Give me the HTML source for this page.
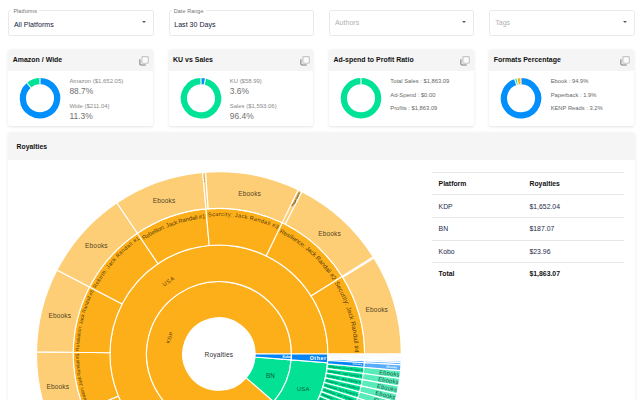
<!DOCTYPE html>
<html><head><meta charset="utf-8"><title>Royalties dashboard</title>
<style>
html,body{margin:0;padding:0;}
body{width:640px;height:400px;overflow:hidden;background:#fff;font-family:"Liberation Sans",sans-serif;position:relative;color:#222;}
.sel{position:absolute;top:10.2px;height:23.8px;width:143.4px;border:0.8px solid #e9e9e9;border-radius:2.5px;background:#fff;box-sizing:content-box;}
.sel .fl{position:absolute;left:2.2px;top:-3.3px;padding:0 2px;background:#fff;font-size:5.5px;line-height:7px;color:#757575;letter-spacing:.05px;}
.sel .v{position:absolute;left:4.7px;top:0;line-height:28.6px;font-size:7.05px;color:#15173a;letter-spacing:.02px;}
.sel .ph{position:absolute;left:5.0px;top:0;line-height:24.2px;font-size:7.05px;color:#b1b1b1;}
.sel .car{position:absolute;right:7.0px;top:10.1px;width:0;height:0;border-left:2.3px solid transparent;border-right:2.3px solid transparent;border-top:2.5px solid #5c5c5c;}
.card{position:absolute;top:50px;width:144.7px;height:76px;background:#fff;border-radius:2px;box-shadow:0 0.5px 3px rgba(0,0,0,.11);}
.card .hd{position:absolute;left:0;top:0;right:0;height:21.3px;background:#f5f5f5;border-radius:2px 2px 0 0;}
.card .hd b{position:absolute;left:4.5px;top:0;line-height:20.5px;font-size:6.95px;color:#111;letter-spacing:.02px;}
.card .ic{position:absolute;right:3.7px;top:5.6px;}
.card svg.dn{position:absolute;left:0;top:0;}
.t1{position:absolute;left:61.2px;font-size:5.95px;line-height:8px;color:#8a8a8a;white-space:nowrap;}
.t2{position:absolute;left:61.2px;font-size:8.45px;line-height:10px;color:#707070;white-space:nowrap;}
.t3{position:absolute;left:61.4px;font-size:5.8px;line-height:8px;color:#676767;white-space:nowrap;}
#roy{position:absolute;left:8px;top:132.5px;width:627.4px;height:280px;background:#fff;border-radius:2px;box-shadow:0 0.5px 3px rgba(0,0,0,.11);}
#roy .hd{position:absolute;left:0;top:0;right:0;height:27px;background:#f5f5f5;border-radius:2px 2px 0 0;}
#roy .hd b{position:absolute;left:8.6px;top:0;line-height:28.6px;font-size:6.85px;color:#111;}
#sb{position:absolute;left:0;top:0;}
#sb text{font-family:"Liberation Sans",sans-serif;}
.tb{position:absolute;left:432px;width:192.3px;}
.tb .ln{position:absolute;left:0;right:0;height:0.8px;background:#e6e6e6;}
.tb span{position:absolute;font-size:6.85px;line-height:10px;white-space:nowrap;color:#23294a;}
.tb span.b{font-weight:bold;color:#111;}
</style></head><body>

<div class="sel" style="left:8.2px"><span class="fl">Platforms</span><span class="v">All Platforms</span><i class="car"></i></div>
<div class="sel" style="left:168.55px"><span class="fl">Date Range</span><span class="v">Last 30 Days</span></div>
<div class="sel" style="left:328.9px"><span class="ph">Authors</span><i class="car"></i></div>
<div class="sel" style="left:489.25px"><span class="ph">Tags</span><i class="car"></i></div>
<div class="card" style="left:8.2px"><div class="hd"><b>Amazon / Wide</b><svg class="ic" viewBox="0 0 10 10" width="10" height="10"><path d="M0.9 3.2V8.1Q0.9 9 1.8 9H6.8" fill="none" stroke="#7c7c7c" stroke-width="1.05"/><rect x="2.9" y="0.6" width="6.4" height="6.6" rx="0.8" fill="#fbfbfb" stroke="#c6c6c6" stroke-width="1.15"/></svg></div><svg class="dn" width="146" height="76" viewBox="0 0 146 76"><path d="M32.00 31.12A17.125 17.125 0 1 1 20.84 35.26" fill="none" stroke="#008ffb" stroke-width="6.25"/>
<path d="M20.84 35.26A17.125 17.125 0 0 1 32.00 31.12" fill="none" stroke="#00e396" stroke-width="6.25"/>
<path d="M32.00 34.75L32.00 27.50" stroke="#fff" stroke-width="1.1"/>
<path d="M23.20 38.01L18.47 32.51" stroke="#fff" stroke-width="1.1"/></svg><span class="t1" style="top:26.8px">Amazon ($1,652.05)</span><span class="t2" style="top:36px">88.7%</span><span class="t1" style="top:52px">Wide ($211.04)</span><span class="t2" style="top:60.8px">11.3%</span></div>
<div class="card" style="left:168.55px"><div class="hd"><b>KU vs Sales</b><svg class="ic" viewBox="0 0 10 10" width="10" height="10"><path d="M0.9 3.2V8.1Q0.9 9 1.8 9H6.8" fill="none" stroke="#7c7c7c" stroke-width="1.05"/><rect x="2.9" y="0.6" width="6.4" height="6.6" rx="0.8" fill="#fbfbfb" stroke="#c6c6c6" stroke-width="1.15"/></svg></div><svg class="dn" width="146" height="76" viewBox="0 0 146 76"><path d="M32.00 31.12A17.125 17.125 0 0 1 35.84 31.56" fill="none" stroke="#008ffb" stroke-width="6.25"/>
<path d="M35.84 31.56A17.125 17.125 0 1 1 32.00 31.12" fill="none" stroke="#00e396" stroke-width="6.25"/>
<path d="M32.00 34.75L32.00 27.50" stroke="#fff" stroke-width="1.1"/>
<path d="M35.03 35.09L36.65 28.03" stroke="#fff" stroke-width="1.1"/></svg><span class="t1" style="top:26.8px">KU ($58.99)</span><span class="t2" style="top:36px">3.6%</span><span class="t1" style="top:52px">Sales ($1,593.06)</span><span class="t2" style="top:60.8px">96.4%</span></div>
<div class="card" style="left:328.9px"><div class="hd"><b>Ad-spend to Profit Ratio</b><svg class="ic" viewBox="0 0 10 10" width="10" height="10"><path d="M0.9 3.2V8.1Q0.9 9 1.8 9H6.8" fill="none" stroke="#7c7c7c" stroke-width="1.05"/><rect x="2.9" y="0.6" width="6.4" height="6.6" rx="0.8" fill="#fbfbfb" stroke="#c6c6c6" stroke-width="1.15"/></svg></div><svg class="dn" width="146" height="76" viewBox="0 0 146 76"><circle cx="32.0" cy="48.25" r="17.125" fill="none" stroke="#00e396" stroke-width="6.25"/>
<path d="M32.00 34.75L32.00 27.50" stroke="#fff" stroke-width="1.1"/></svg><span class="t3" style="top:26.6px">Total Sales : $1,863.09</span><span class="t3" style="top:40.5px">Ad-Spend : $0.00</span><span class="t3" style="top:54.3px">Profits : $1,863.09</span></div>
<div class="card" style="left:489.25px"><div class="hd"><b>Formats Percentage</b><svg class="ic" viewBox="0 0 10 10" width="10" height="10"><path d="M0.9 3.2V8.1Q0.9 9 1.8 9H6.8" fill="none" stroke="#7c7c7c" stroke-width="1.05"/><rect x="2.9" y="0.6" width="6.4" height="6.6" rx="0.8" fill="#fbfbfb" stroke="#c6c6c6" stroke-width="1.15"/></svg></div><svg class="dn" width="146" height="76" viewBox="0 0 146 76"><path d="M32.00 31.12A17.125 17.125 0 1 1 26.61 32.00" fill="none" stroke="#008ffb" stroke-width="6.25"/>
<path d="M26.61 32.00A17.125 17.125 0 0 1 28.58 31.47" fill="none" stroke="#00e396" stroke-width="6.25"/>
<path d="M28.58 31.47A17.125 17.125 0 0 1 32.00 31.12" fill="none" stroke="#feb019" stroke-width="6.25"/>
<path d="M32.00 34.75L32.00 27.50" stroke="#fff" stroke-width="1.1"/>
<path d="M27.75 35.44L25.46 28.56" stroke="#fff" stroke-width="1.1"/>
<path d="M29.30 35.02L27.86 27.92" stroke="#fff" stroke-width="1.1"/></svg><span class="t3" style="top:26.6px">Ebook : 94.9%</span><span class="t3" style="top:40.5px">Paperback : 1.9%</span><span class="t3" style="top:54.3px">KENP Reads : 3.2%</span></div>
<div id="roy"><div class="hd"><b>Royalties</b></div></div>
<svg id="sb" width="640" height="400" viewBox="0 0 640 400"><defs><path id="bk0" d="M89.28 406.68A139.89999999999998 139.89999999999998 0 0 1 79.00 353.81" fill="none"/><path id="bk1" d="M79.04 350.88A139.89999999999998 139.89999999999998 0 0 1 94.03 290.97" fill="none"/><path id="bk2" d="M95.91 288.65A139.29999999999998 139.29999999999998 0 0 1 139.80 239.39" fill="none"/><path id="bk3" d="M143.76 240.09A136.5 136.5 0 0 1 205.34 218.22" fill="none"/><path id="bk4" d="M208.07 216.48A138.0 138.0 0 0 1 277.66 229.18" fill="none"/><path id="bk5" d="M279.28 232.41A135.79999999999998 135.79999999999998 0 0 1 333.05 280.49" fill="none"/><path id="bk6" d="M334.39 283.00A135.6 135.6 0 0 1 354.49 352.63" fill="none"/></defs>
<path d="M246.22 377.80L273.62 401.61A72.5 72.5 0 1 1 291.40 354.05L255.10 354.05A36.2 36.2 0 1 0 246.22 377.80Z" fill="#fdaf19" stroke="#fff" stroke-width="1.12"/>
<path d="M254.98 356.95L291.17 359.86A72.5 72.5 0 0 1 273.62 401.61L246.22 377.80A36.2 36.2 0 0 0 254.98 356.95Z" fill="#02e194" stroke="#fff" stroke-width="1.12"/>
<path d="M255.10 354.05L291.40 354.05A72.5 72.5 0 0 1 291.17 359.86L254.98 356.95A36.2 36.2 0 0 0 255.10 354.05Z" fill="#0585f5" stroke="#fff" stroke-width="1.12"/>
<path d="M273.62 401.61L301.16 425.56A109.0 109.0 0 0 1 180.19 455.95L193.15 421.82A72.5 72.5 0 0 0 273.62 401.61Z" fill="#fdaf19" stroke="#fff" stroke-width="1.12"/>
<path d="M193.15 421.82L180.19 455.95A109.0 109.0 0 1 1 327.90 354.05L291.40 354.05A72.5 72.5 0 1 0 193.15 421.82Z" fill="#fdaf19" stroke="#fff" stroke-width="1.12"/>
<path d="M291.17 359.86L327.55 362.79A109.0 109.0 0 0 1 301.16 425.56L273.62 401.61A72.5 72.5 0 0 0 291.17 359.86Z" fill="#02e194" stroke="#fff" stroke-width="1.12"/>
<path d="M291.40 354.05L327.90 354.05A109.0 109.0 0 0 1 327.55 362.79L291.17 359.86A72.5 72.5 0 0 0 291.40 354.05Z" fill="#0585f5" stroke="#fff" stroke-width="1.12"/>
<path d="M180.19 455.95L167.16 490.25A145.7 145.7 0 0 1 84.49 410.28L118.34 396.11A109.0 109.0 0 0 0 180.19 455.95Z" fill="#fdaf19" stroke="#fff" stroke-width="1.12"/>
<path d="M167.16 490.25L154.13 524.56A182.4 182.4 0 0 1 50.63 424.44L84.49 410.28A145.7 145.7 0 0 0 167.16 490.25Z" fill="#fdce75" stroke="#fff" stroke-width="1.12"/>
<path d="M118.34 396.11L84.49 410.28A145.7 145.7 0 0 1 73.21 352.27L109.91 352.72A109.0 109.0 0 0 0 118.34 396.11Z" fill="#fdaf19" stroke="#fff" stroke-width="1.12"/>
<path d="M84.49 410.28L50.63 424.44A182.4 182.4 0 0 1 36.51 351.82L73.21 352.27A145.7 145.7 0 0 0 84.49 410.28Z" fill="#fdce75" stroke="#fff" stroke-width="1.12"/>
<text x="57.86" y="386.15" font-size="6.6" fill="rgba(0,0,0,.72)" text-anchor="middle" dominant-baseline="central" font-weight="normal" letter-spacing="0.1">Ebooks</text>
<text font-size="4.9" fill="rgba(0,0,0,.72)" textLength="54.2" lengthAdjust="spacing"><textPath href="#bk0" textLength="54.2" lengthAdjust="spacing">Liberation: Jack Randall #5</textPath></text>
<path d="M109.91 352.72L73.21 352.27A145.7 145.7 0 0 1 89.55 287.00L122.13 303.89A109.0 109.0 0 0 0 109.91 352.72Z" fill="#fdaf19" stroke="#fff" stroke-width="1.12"/>
<path d="M73.21 352.27L36.51 351.82A182.4 182.4 0 0 1 56.96 270.11L89.55 287.00A145.7 145.7 0 0 0 73.21 352.27Z" fill="#fdce75" stroke="#fff" stroke-width="1.12"/>
<text x="59.76" y="315.02" font-size="6.6" fill="rgba(0,0,0,.72)" text-anchor="middle" dominant-baseline="central" font-weight="normal" letter-spacing="0.1">Ebooks</text>
<text font-size="4.9" fill="rgba(0,0,0,.72)" textLength="62.3" lengthAdjust="spacing"><textPath href="#bk1" textLength="62.3" lengthAdjust="spacing">Retaliation: Jack Randall #6</textPath></text>
<path d="M122.13 303.89L89.55 287.00A145.7 145.7 0 0 1 137.43 233.26L157.95 263.68A109.0 109.0 0 0 0 122.13 303.89Z" fill="#fdaf19" stroke="#fff" stroke-width="1.12"/>
<path d="M89.55 287.00L56.96 270.11A182.4 182.4 0 0 1 116.90 202.83L137.43 233.26A145.7 145.7 0 0 0 89.55 287.00Z" fill="#fdce75" stroke="#fff" stroke-width="1.12"/>
<text x="96.41" y="245.72" font-size="6.6" fill="rgba(0,0,0,.72)" text-anchor="middle" dominant-baseline="central" font-weight="normal" letter-spacing="0.1">Ebooks</text>
<text font-size="5.4" fill="rgba(0,0,0,.72)" textLength="66.6" lengthAdjust="spacing"><textPath href="#bk2" textLength="66.6" lengthAdjust="spacing">Rebirth: Jack Randall #1</textPath></text>
<path d="M157.95 263.68L137.43 233.26A145.7 145.7 0 0 1 205.95 208.93L209.21 245.48A109.0 109.0 0 0 0 157.95 263.68Z" fill="#fdaf19" stroke="#fff" stroke-width="1.12"/>
<path d="M137.43 233.26L116.90 202.83A182.4 182.4 0 0 1 202.69 172.37L205.95 208.93A145.7 145.7 0 0 0 137.43 233.26Z" fill="#fdce75" stroke="#fff" stroke-width="1.12"/>
<text x="164.00" y="200.26" font-size="6.6" fill="rgba(0,0,0,.72)" text-anchor="middle" dominant-baseline="central" font-weight="normal" letter-spacing="0.1">Ebooks</text>
<text font-size="5.9" fill="rgba(0,0,0,.72)" textLength="66.0" lengthAdjust="spacing"><textPath href="#bk3" textLength="66.0" lengthAdjust="spacing">Rebellion: Jack Randall #1</textPath></text>
<path d="M209.21 245.48L205.95 208.93A145.7 145.7 0 0 1 282.31 222.87L266.34 255.92A109.0 109.0 0 0 0 209.21 245.48Z" fill="#fdaf19" stroke="#fff" stroke-width="1.12"/>
<path d="M205.95 208.93L202.69 172.37A182.4 182.4 0 0 1 205.54 172.14L208.23 208.74A145.7 145.7 0 0 0 205.95 208.93Z" fill="#fdce75" stroke="#fff" stroke-width="1.12"/>
<path d="M208.23 208.74L205.54 172.14A182.4 182.4 0 0 1 298.29 189.83L282.31 222.87A145.7 145.7 0 0 0 208.23 208.74Z" fill="#fdce75" stroke="#fff" stroke-width="1.12"/>
<text x="249.64" y="193.71" font-size="6.6" fill="rgba(0,0,0,.72)" text-anchor="middle" dominant-baseline="central" font-weight="normal" letter-spacing="0.1">Ebooks</text>
<text font-size="5.7" fill="rgba(0,0,0,.72)" textLength="71.5" lengthAdjust="spacing"><textPath href="#bk4" textLength="71.5" lengthAdjust="spacing">Scarcity: Jack Randall #3</textPath></text>
<path d="M266.34 255.92L282.31 222.87A145.7 145.7 0 0 1 342.19 276.41L311.14 295.97A109.0 109.0 0 0 0 266.34 255.92Z" fill="#fdaf19" stroke="#fff" stroke-width="1.12"/>
<path d="M282.31 222.87L298.29 189.83A182.4 182.4 0 0 1 301.99 191.68L285.27 224.35A145.7 145.7 0 0 0 282.31 222.87Z" fill="#fdce75" stroke="#fff" stroke-width="1.12"/>
<path d="M285.27 224.35L301.99 191.68A182.4 182.4 0 0 1 373.25 256.85L342.19 276.41A145.7 145.7 0 0 0 285.27 224.35Z" fill="#fdce75" stroke="#fff" stroke-width="1.12"/>
<text x="329.62" y="233.80" font-size="6.6" fill="rgba(0,0,0,.72)" text-anchor="middle" dominant-baseline="central" font-weight="normal" letter-spacing="0.1">Ebooks</text>
<text font-size="6.2" fill="rgba(0,0,0,.72)" textLength="73.0" lengthAdjust="spacing"><textPath href="#bk5" textLength="73.0" lengthAdjust="spacing">Resilience: Jack Randall #2</textPath></text>
<path d="M311.14 295.97L342.19 276.41A145.7 145.7 0 0 1 364.60 354.05L327.90 354.05A109.0 109.0 0 0 0 311.14 295.97Z" fill="#fdaf19" stroke="#fff" stroke-width="1.12"/>
<path d="M342.19 276.41L373.25 256.85A182.4 182.4 0 0 1 374.00 258.07L342.80 277.38A145.7 145.7 0 0 0 342.19 276.41Z" fill="#fdce75" stroke="#fff" stroke-width="1.12"/>
<path d="M342.80 277.38L374.00 258.07A182.4 182.4 0 0 1 401.30 354.05L364.60 354.05A145.7 145.7 0 0 0 342.80 277.38Z" fill="#fdce75" stroke="#fff" stroke-width="1.12"/>
<text x="376.69" y="309.98" font-size="6.6" fill="rgba(0,0,0,.72)" text-anchor="middle" dominant-baseline="central" font-weight="normal" letter-spacing="0.1">Ebooks</text>
<text font-size="6.3" fill="rgba(0,0,0,.72)" textLength="73.4" lengthAdjust="spacing"><textPath href="#bk6" textLength="73.4" lengthAdjust="spacing">Security: Jack Randall #4</textPath></text>
<text x="204.60" y="178.23" font-size="1.9" fill="rgba(0,0,0,.6)" text-anchor="middle" dominant-baseline="central" font-weight="normal" letter-spacing="0" transform="rotate(445.4 204.60 178.23)">Paperback</text>
<text x="295.91" y="199.25" font-size="3.1" fill="rgba(0,0,0,.8)" text-anchor="middle" dominant-baseline="central" font-weight="bold" letter-spacing="0" transform="rotate(296.4 295.91 199.25)">Paperback</text>
<path d="M327.45 363.93L364.00 367.26A145.7 145.7 0 0 1 363.29 373.57L326.92 368.65A109.0 109.0 0 0 0 327.45 363.93Z" fill="#02e194" stroke="#fff" stroke-width="1.12"/>
<path d="M364.00 367.26L400.55 370.58A182.4 182.4 0 0 1 399.66 378.49L363.29 373.57A145.7 145.7 0 0 0 364.00 367.26Z" fill="#58ecba" stroke="#fff" stroke-width="1.12"/>
<text x="389.46" y="373.33" font-size="5.9" fill="rgba(0,0,0,.7)" text-anchor="middle" dominant-baseline="central" font-weight="normal" letter-spacing="0.15" transform="rotate(6.5 389.46 373.33)">Ebooks</text>
<text x="346.44" y="368.47" font-size="3.0" fill="rgba(0,0,0,.75)" text-anchor="middle" dominant-baseline="central" font-weight="normal" letter-spacing="0" transform="rotate(6.5 346.44 368.47)">Rebellion: Jack Randall #1</text>
<path d="M326.92 368.65L363.29 373.57A145.7 145.7 0 0 1 362.34 379.60L326.21 373.16A109.0 109.0 0 0 0 326.92 368.65Z" fill="#02e194" stroke="#fff" stroke-width="1.12"/>
<path d="M363.29 373.57L399.66 378.49A182.4 182.4 0 0 1 398.47 386.04L362.34 379.60A145.7 145.7 0 0 0 363.29 373.57Z" fill="#58ecba" stroke="#fff" stroke-width="1.12"/>
<text x="388.48" y="380.61" font-size="5.9" fill="rgba(0,0,0,.7)" text-anchor="middle" dominant-baseline="central" font-weight="normal" letter-spacing="0.15" transform="rotate(8.9 388.48 380.61)">Ebooks</text>
<text x="345.70" y="373.91" font-size="3.0" fill="rgba(0,0,0,.75)" text-anchor="middle" dominant-baseline="central" font-weight="normal" letter-spacing="0" transform="rotate(8.9 345.70 373.91)">Rebellion: Jack Randall #1</text>
<path d="M326.21 373.16L362.34 379.60A145.7 145.7 0 0 1 361.09 385.83L325.27 377.83A109.0 109.0 0 0 0 326.21 373.16Z" fill="#02e194" stroke="#fff" stroke-width="1.12"/>
<path d="M362.34 379.60L398.47 386.04A182.4 182.4 0 0 1 396.91 393.84L361.09 385.83A145.7 145.7 0 0 0 362.34 379.60Z" fill="#58ecba" stroke="#fff" stroke-width="1.12"/>
<text x="387.19" y="387.83" font-size="5.9" fill="rgba(0,0,0,.7)" text-anchor="middle" dominant-baseline="central" font-weight="normal" letter-spacing="0.15" transform="rotate(11.3 387.19 387.83)">Ebooks</text>
<text x="344.74" y="379.31" font-size="3.0" fill="rgba(0,0,0,.75)" text-anchor="middle" dominant-baseline="central" font-weight="normal" letter-spacing="0" transform="rotate(11.3 344.74 379.31)">Rebellion: Jack Randall #1</text>
<path d="M325.27 377.83L361.09 385.83A145.7 145.7 0 0 1 359.57 392.01L324.14 382.44A109.0 109.0 0 0 0 325.27 377.83Z" fill="#02e194" stroke="#fff" stroke-width="1.12"/>
<path d="M361.09 385.83L396.91 393.84A182.4 182.4 0 0 1 395.00 401.57L359.57 392.01A145.7 145.7 0 0 0 361.09 385.83Z" fill="#58ecba" stroke="#fff" stroke-width="1.12"/>
<text x="385.56" y="395.14" font-size="5.9" fill="rgba(0,0,0,.7)" text-anchor="middle" dominant-baseline="central" font-weight="normal" letter-spacing="0.15" transform="rotate(13.8 385.56 395.14)">Ebooks</text>
<text x="343.52" y="384.77" font-size="3.0" fill="rgba(0,0,0,.75)" text-anchor="middle" dominant-baseline="central" font-weight="normal" letter-spacing="0" transform="rotate(13.8 343.52 384.77)">Rebellion: Jack Randall #1</text>
<path d="M324.14 382.44L359.57 392.01A145.7 145.7 0 0 1 357.78 398.11L322.80 387.01A109.0 109.0 0 0 0 324.14 382.44Z" fill="#02e194" stroke="#fff" stroke-width="1.12"/>
<path d="M359.57 392.01L395.00 401.57A182.4 182.4 0 0 1 392.76 409.20L357.78 398.11A145.7 145.7 0 0 0 359.57 392.01Z" fill="#58ecba" stroke="#fff" stroke-width="1.12"/>
<text x="383.61" y="402.37" font-size="5.9" fill="rgba(0,0,0,.7)" text-anchor="middle" dominant-baseline="central" font-weight="normal" letter-spacing="0.15" transform="rotate(16.4 383.61 402.37)">Ebooks</text>
<text x="342.06" y="390.18" font-size="3.0" fill="rgba(0,0,0,.75)" text-anchor="middle" dominant-baseline="central" font-weight="normal" letter-spacing="0" transform="rotate(16.4 342.06 390.18)">Rebellion: Jack Randall #1</text>
<path d="M322.80 387.01L357.78 398.11A145.7 145.7 0 0 1 355.68 404.24L321.23 391.60A109.0 109.0 0 0 0 322.80 387.01Z" fill="#02e194" stroke="#fff" stroke-width="1.12"/>
<path d="M357.78 398.11L392.76 409.20A182.4 182.4 0 0 1 390.14 416.88L355.68 404.24A145.7 145.7 0 0 0 357.78 398.11Z" fill="#58ecba" stroke="#fff" stroke-width="1.12"/>
<text x="381.32" y="409.58" font-size="5.9" fill="rgba(0,0,0,.7)" text-anchor="middle" dominant-baseline="central" font-weight="normal" letter-spacing="0.15" transform="rotate(18.9 381.32 409.58)">Ebooks</text>
<text x="340.35" y="395.57" font-size="3.0" fill="rgba(0,0,0,.75)" text-anchor="middle" dominant-baseline="central" font-weight="normal" letter-spacing="0" transform="rotate(18.9 340.35 395.57)">Rebellion: Jack Randall #1</text>
<path d="M321.23 391.60L355.68 404.24A145.7 145.7 0 0 1 353.36 410.16L319.49 396.03A109.0 109.0 0 0 0 321.23 391.60Z" fill="#02e194" stroke="#fff" stroke-width="1.12"/>
<path d="M355.68 404.24L390.14 416.88A182.4 182.4 0 0 1 387.23 424.29L353.36 410.16A145.7 145.7 0 0 0 355.68 404.24Z" fill="#58ecba" stroke="#fff" stroke-width="1.12"/>
<text x="378.72" y="416.68" font-size="5.9" fill="rgba(0,0,0,.7)" text-anchor="middle" dominant-baseline="central" font-weight="normal" letter-spacing="0.15" transform="rotate(21.4 378.72 416.68)">Ebooks</text>
<text x="338.40" y="400.88" font-size="3.0" fill="rgba(0,0,0,.75)" text-anchor="middle" dominant-baseline="central" font-weight="normal" letter-spacing="0" transform="rotate(21.4 338.40 400.88)">Rebellion: Jack Randall #1</text>
<path d="M319.49 396.03L353.36 410.16A145.7 145.7 0 0 1 350.79 415.97L317.57 400.37A109.0 109.0 0 0 0 319.49 396.03Z" fill="#02e194" stroke="#fff" stroke-width="1.12"/>
<path d="M353.36 410.16L387.23 424.29A182.4 182.4 0 0 1 384.01 431.57L350.79 415.97A145.7 145.7 0 0 0 353.36 410.16Z" fill="#58ecba" stroke="#fff" stroke-width="1.12"/>
<text x="375.83" y="423.59" font-size="5.9" fill="rgba(0,0,0,.7)" text-anchor="middle" dominant-baseline="central" font-weight="normal" letter-spacing="0.15" transform="rotate(23.9 375.83 423.59)">Ebooks</text>
<text x="336.24" y="406.05" font-size="3.0" fill="rgba(0,0,0,.75)" text-anchor="middle" dominant-baseline="central" font-weight="normal" letter-spacing="0" transform="rotate(23.9 336.24 406.05)">Rebellion: Jack Randall #1</text>
<path d="M317.57 400.37L350.79 415.97A145.7 145.7 0 0 1 347.96 421.66L315.45 404.63A109.0 109.0 0 0 0 317.57 400.37Z" fill="#02e194" stroke="#fff" stroke-width="1.12"/>
<path d="M350.79 415.97L384.01 431.57A182.4 182.4 0 0 1 380.47 438.70L347.96 421.66A145.7 145.7 0 0 0 350.79 415.97Z" fill="#58ecba" stroke="#fff" stroke-width="1.12"/>
<text x="372.65" y="430.37" font-size="5.9" fill="rgba(0,0,0,.7)" text-anchor="middle" dominant-baseline="central" font-weight="normal" letter-spacing="0.15" transform="rotate(26.4 372.65 430.37)">Ebooks</text>
<text x="333.86" y="411.12" font-size="3.0" fill="rgba(0,0,0,.75)" text-anchor="middle" dominant-baseline="central" font-weight="normal" letter-spacing="0" transform="rotate(26.4 333.86 411.12)">Rebellion: Jack Randall #1</text>
<path d="M315.45 404.63L347.96 421.66A145.7 145.7 0 0 1 344.89 427.23L313.15 408.80A109.0 109.0 0 0 0 315.45 404.63Z" fill="#02e194" stroke="#fff" stroke-width="1.12"/>
<path d="M347.96 421.66L380.47 438.70A182.4 182.4 0 0 1 376.62 445.66L344.89 427.23A145.7 145.7 0 0 0 347.96 421.66Z" fill="#58ecba" stroke="#fff" stroke-width="1.12"/>
<text x="369.17" y="437.01" font-size="5.9" fill="rgba(0,0,0,.7)" text-anchor="middle" dominant-baseline="central" font-weight="normal" letter-spacing="0.15" transform="rotate(28.9 369.17 437.01)">Ebooks</text>
<text x="331.27" y="416.08" font-size="3.0" fill="rgba(0,0,0,.75)" text-anchor="middle" dominant-baseline="central" font-weight="normal" letter-spacing="0" transform="rotate(28.9 331.27 416.08)">Rebellion: Jack Randall #1</text>
<path d="M313.15 408.80L344.89 427.23A145.7 145.7 0 0 1 341.58 432.66L310.68 412.86A109.0 109.0 0 0 0 313.15 408.80Z" fill="#02e194" stroke="#fff" stroke-width="1.12"/>
<path d="M344.89 427.23L376.62 445.66A182.4 182.4 0 0 1 372.48 452.46L341.58 432.66A145.7 145.7 0 0 0 344.89 427.23Z" fill="#58ecba" stroke="#fff" stroke-width="1.12"/>
<text x="365.41" y="443.48" font-size="5.9" fill="rgba(0,0,0,.7)" text-anchor="middle" dominant-baseline="central" font-weight="normal" letter-spacing="0.15" transform="rotate(31.4 365.41 443.48)">Ebooks</text>
<text x="328.45" y="420.92" font-size="3.0" fill="rgba(0,0,0,.75)" text-anchor="middle" dominant-baseline="central" font-weight="normal" letter-spacing="0" transform="rotate(31.4 328.45 420.92)">Rebellion: Jack Randall #1</text>
<path d="M310.68 412.86L341.58 432.66A145.7 145.7 0 0 1 338.03 437.93L308.02 416.80A109.0 109.0 0 0 0 310.68 412.86Z" fill="#02e194" stroke="#fff" stroke-width="1.12"/>
<path d="M341.58 432.66L372.48 452.46A182.4 182.4 0 0 1 368.04 459.06L338.03 437.93A145.7 145.7 0 0 0 341.58 432.66Z" fill="#58ecba" stroke="#fff" stroke-width="1.12"/>
<text x="361.37" y="449.79" font-size="5.9" fill="rgba(0,0,0,.7)" text-anchor="middle" dominant-baseline="central" font-weight="normal" letter-spacing="0.15" transform="rotate(33.9 361.37 449.79)">Ebooks</text>
<text x="325.43" y="425.64" font-size="3.0" fill="rgba(0,0,0,.75)" text-anchor="middle" dominant-baseline="central" font-weight="normal" letter-spacing="0" transform="rotate(33.9 325.43 425.64)">Rebellion: Jack Randall #1</text>
<path d="M308.02 416.80L338.03 437.93A145.7 145.7 0 0 1 334.26 443.05L305.20 420.63A109.0 109.0 0 0 0 308.02 416.80Z" fill="#02e194" stroke="#fff" stroke-width="1.12"/>
<path d="M338.03 437.93L368.04 459.06A182.4 182.4 0 0 1 363.32 465.47L334.26 443.05A145.7 145.7 0 0 0 338.03 437.93Z" fill="#58ecba" stroke="#fff" stroke-width="1.12"/>
<text x="357.06" y="455.91" font-size="5.9" fill="rgba(0,0,0,.7)" text-anchor="middle" dominant-baseline="central" font-weight="normal" letter-spacing="0.15" transform="rotate(36.4 357.06 455.91)">Ebooks</text>
<text x="322.21" y="430.22" font-size="3.0" fill="rgba(0,0,0,.75)" text-anchor="middle" dominant-baseline="central" font-weight="normal" letter-spacing="0" transform="rotate(36.4 322.21 430.22)">Rebellion: Jack Randall #1</text>
<path d="M305.20 420.63L334.26 443.05A145.7 145.7 0 0 1 330.27 448.00L302.22 424.33A109.0 109.0 0 0 0 305.20 420.63Z" fill="#02e194" stroke="#fff" stroke-width="1.12"/>
<path d="M334.26 443.05L363.32 465.47A182.4 182.4 0 0 1 358.32 471.66L330.27 448.00A145.7 145.7 0 0 0 334.26 443.05Z" fill="#58ecba" stroke="#fff" stroke-width="1.12"/>
<text x="352.49" y="461.84" font-size="5.9" fill="rgba(0,0,0,.7)" text-anchor="middle" dominant-baseline="central" font-weight="normal" letter-spacing="0.15" transform="rotate(38.9 352.49 461.84)">Ebooks</text>
<text x="318.79" y="434.65" font-size="3.0" fill="rgba(0,0,0,.75)" text-anchor="middle" dominant-baseline="central" font-weight="normal" letter-spacing="0" transform="rotate(38.9 318.79 434.65)">Rebellion: Jack Randall #1</text>
<path d="M302.22 424.33L330.27 448.00A145.7 145.7 0 0 1 328.86 449.64L301.16 425.56A109.0 109.0 0 0 0 302.22 424.33Z" fill="#02e194" stroke="#fff" stroke-width="1.12"/>
<path d="M330.27 448.00L358.32 471.66A182.4 182.4 0 0 1 356.56 473.72L328.86 449.64A145.7 145.7 0 0 0 330.27 448.00Z" fill="#58ecba" stroke="#fff" stroke-width="1.12"/>
<text x="349.28" y="465.70" font-size="5.9" fill="rgba(0,0,0,.7)" text-anchor="middle" dominant-baseline="central" font-weight="normal" letter-spacing="0.15" transform="rotate(40.6 349.28 465.70)">Ebooks</text>
<text x="316.39" y="437.53" font-size="3.0" fill="rgba(0,0,0,.75)" text-anchor="middle" dominant-baseline="central" font-weight="normal" letter-spacing="0" transform="rotate(40.6 316.39 437.53)">Rebellion: Jack Randall #1</text>
<path d="M327.90 354.05L364.60 354.05A145.7 145.7 0 0 1 364.60 354.56L327.90 354.43A109.0 109.0 0 0 0 327.90 354.05Z" fill="#0585f5" stroke="#fff" stroke-width="1.12"/>
<path d="M364.60 354.05L401.30 354.05A182.4 182.4 0 0 1 401.30 354.69L364.60 354.56A145.7 145.7 0 0 0 364.60 354.05Z" fill="#58acfa" stroke="#fff" stroke-width="1.12"/>
<path d="M327.90 354.43L364.60 354.56A145.7 145.7 0 0 1 364.60 355.07L327.90 354.81A109.0 109.0 0 0 0 327.90 354.43Z" fill="#0585f5" stroke="#fff" stroke-width="1.12"/>
<path d="M364.60 354.56L401.30 354.69A182.4 182.4 0 0 1 401.30 355.32L364.60 355.07A145.7 145.7 0 0 0 364.60 354.56Z" fill="#58acfa" stroke="#fff" stroke-width="1.12"/>
<path d="M327.90 354.81L364.60 355.07A145.7 145.7 0 0 1 364.59 355.70L327.89 355.29A109.0 109.0 0 0 0 327.90 354.81Z" fill="#0585f5" stroke="#fff" stroke-width="1.12"/>
<path d="M364.60 355.07L401.30 355.32A182.4 182.4 0 0 1 401.29 356.12L364.59 355.70A145.7 145.7 0 0 0 364.60 355.07Z" fill="#58acfa" stroke="#fff" stroke-width="1.12"/>
<path d="M327.89 355.29L364.59 355.70A145.7 145.7 0 0 1 364.58 356.34L327.89 355.76A109.0 109.0 0 0 0 327.89 355.29Z" fill="#0585f5" stroke="#fff" stroke-width="1.12"/>
<path d="M364.59 355.70L401.29 356.12A182.4 182.4 0 0 1 401.28 356.92L364.58 356.34A145.7 145.7 0 0 0 364.59 355.70Z" fill="#58acfa" stroke="#fff" stroke-width="1.12"/>
<path d="M327.89 355.76L364.58 356.34A145.7 145.7 0 0 1 364.57 357.10L327.88 356.33A109.0 109.0 0 0 0 327.89 355.76Z" fill="#0585f5" stroke="#fff" stroke-width="1.12"/>
<path d="M364.58 356.34L401.28 356.92A182.4 182.4 0 0 1 401.26 357.87L364.57 357.10A145.7 145.7 0 0 0 364.58 356.34Z" fill="#58acfa" stroke="#fff" stroke-width="1.12"/>
<path d="M327.88 356.33L364.57 357.10A145.7 145.7 0 0 1 364.55 357.86L327.86 356.90A109.0 109.0 0 0 0 327.88 356.33Z" fill="#0585f5" stroke="#fff" stroke-width="1.12"/>
<path d="M364.57 357.10L401.26 357.87A182.4 182.4 0 0 1 401.24 358.82L364.55 357.86A145.7 145.7 0 0 0 364.57 357.10Z" fill="#58acfa" stroke="#fff" stroke-width="1.12"/>
<path d="M327.86 356.90L364.55 357.86A145.7 145.7 0 0 1 364.52 358.75L327.84 357.57A109.0 109.0 0 0 0 327.86 356.90Z" fill="#0585f5" stroke="#fff" stroke-width="1.12"/>
<path d="M364.55 357.86L401.24 358.82A182.4 182.4 0 0 1 401.20 359.94L364.52 358.75A145.7 145.7 0 0 0 364.55 357.86Z" fill="#58acfa" stroke="#fff" stroke-width="1.12"/>
<path d="M327.84 357.57L364.52 358.75A145.7 145.7 0 0 1 364.49 359.64L327.82 358.23A109.0 109.0 0 0 0 327.84 357.57Z" fill="#0585f5" stroke="#fff" stroke-width="1.12"/>
<path d="M364.52 358.75L401.20 359.94A182.4 182.4 0 0 1 401.17 361.05L364.49 359.64A145.7 145.7 0 0 0 364.52 358.75Z" fill="#58acfa" stroke="#fff" stroke-width="1.12"/>
<path d="M327.82 358.23L364.49 359.64A145.7 145.7 0 0 1 364.44 360.91L327.78 359.18A109.0 109.0 0 0 0 327.82 358.23Z" fill="#0585f5" stroke="#fff" stroke-width="1.12"/>
<path d="M364.49 359.64L401.17 361.05A182.4 182.4 0 0 1 401.10 362.64L364.44 360.91A145.7 145.7 0 0 0 364.49 359.64Z" fill="#58acfa" stroke="#fff" stroke-width="1.12"/>
<path d="M327.78 359.18L364.44 360.91A145.7 145.7 0 0 1 364.34 362.69L327.71 360.51A109.0 109.0 0 0 0 327.78 359.18Z" fill="#0585f5" stroke="#fff" stroke-width="1.12"/>
<path d="M364.44 360.91L401.10 362.64A182.4 182.4 0 0 1 400.98 364.87L364.34 362.69A145.7 145.7 0 0 0 364.44 360.91Z" fill="#58acfa" stroke="#fff" stroke-width="1.12"/>
<path d="M327.71 360.51L364.34 362.69A145.7 145.7 0 0 1 364.00 367.26L327.45 363.93A109.0 109.0 0 0 0 327.71 360.51Z" fill="#0585f5" stroke="#fff" stroke-width="1.12"/>
<path d="M364.34 362.69L400.98 364.87A182.4 182.4 0 0 1 400.55 370.58L364.00 367.26A145.7 145.7 0 0 0 364.34 362.69Z" fill="#58acfa" stroke="#fff" stroke-width="1.12"/>
<text x="357.21" y="364.45" font-size="2.6" fill="#fff" text-anchor="middle" dominant-baseline="central" font-weight="bold" letter-spacing="0" transform="rotate(4.3 357.21 364.45)">Ebooks</text>
<text x="391.81" y="367.05" font-size="3.0" fill="#fff" text-anchor="middle" dominant-baseline="central" font-weight="bold" letter-spacing="0" transform="rotate(4.3 391.81 367.05)">Ebooks</text>
<text x="169.62" y="337.46" font-size="5.2" fill="rgba(0,0,0,.72)" text-anchor="middle" dominant-baseline="central" font-weight="normal" letter-spacing="0.5" transform="rotate(288.6 169.62 337.46)">KDP</text>
<text x="168.59" y="281.12" font-size="5.6" fill="rgba(0,0,0,.72)" text-anchor="middle" dominant-baseline="central" font-weight="normal" letter-spacing="0.7" transform="rotate(325.4 168.59 281.12)">USA</text>
<text x="270.39" y="375.80" font-size="6.3" fill="rgba(0,0,0,.66)" text-anchor="middle" dominant-baseline="central" font-weight="normal" letter-spacing="0.1">BN</text>
<text x="303.31" y="389.36" font-size="6.0" fill="rgba(0,0,0,.66)" text-anchor="middle" dominant-baseline="central" font-weight="normal" letter-spacing="0.2">USA</text>
<text x="286.85" y="356.54" font-size="3.4" fill="#fff" text-anchor="middle" dominant-baseline="central" font-weight="bold" letter-spacing="0">Kobo</text>
<text x="318.22" y="358.13" font-size="5.3" fill="#fff" text-anchor="middle" dominant-baseline="central" font-weight="bold" letter-spacing="0.6">Other</text>
<circle cx="218.9" cy="354.05" r="36.2" fill="#fff"/>
<text x="218.9" y="354.65000000000003" font-size="6.6" fill="#303030" text-anchor="middle" dominant-baseline="central" letter-spacing="0.17">Royalties</text>
</svg>
<div class="tb" style="top:0">
<i class="ln" style="top:171.6px"></i>
<i class="ln" style="top:194.0px"></i>
<i class="ln" style="top:216.6px"></i>
<i class="ln" style="top:239.6px"></i>
<i class="ln" style="top:261.6px"></i>
<span class="b" style="left:6.6px;top:178.6px">Platform</span><span class="b" style="left:97.5px;top:178.6px">Royalties</span>
<span style="left:6.6px;top:201.7px">KDP</span><span style="left:97.5px;top:201.7px">$1,652.04</span>
<span style="left:6.6px;top:223.8px">BN</span><span style="left:97.5px;top:223.8px">$187.07</span>
<span style="left:6.6px;top:246.8px">Kobo</span><span style="left:97.5px;top:246.8px">$23.96</span>
<span class="b" style="left:6.6px;top:268.8px">Total</span><span class="b" style="left:97.5px;top:268.8px">$1,863.07</span>
</div>
</body></html>
